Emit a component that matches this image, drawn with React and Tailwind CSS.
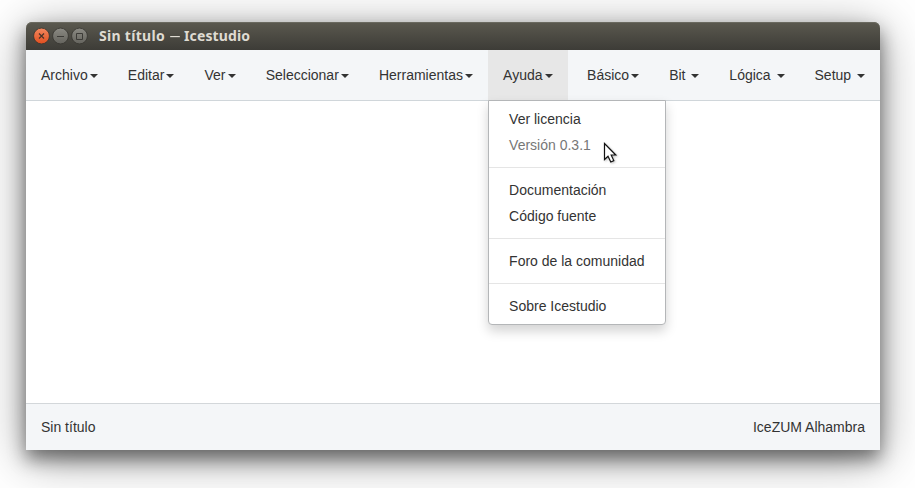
import React from "react";

const leftMenus = ["Archivo", "Editar", "Ver", "Seleccionar", "Herramientas", "Ayuda"];
const rightMenus = ["Básico", "Bit ", "Lógica ", "Setup "];

function Caret() {
  return (
    <span className="ml-[2px] inline-block h-0 w-0 border-x-4 border-t-4 border-x-transparent border-t-[#333] align-middle" />
  );
}

function HelpMenu() {
  return (
    <div className="absolute top-full left-0 z-10 w-[178px] rounded-b border border-[#b4b6b8] bg-white pt-[5px] pb-[5px] shadow-[0_6px_12px_rgba(0,0,0,0.175)]">
      <Item>Ver licencia</Item>
      <Item muted>Versión 0.3.1</Item>
      <Divider />
      <Item>Documentación</Item>
      <Item>Código fuente</Item>
      <Divider />
      <Item>Foro de la comunidad</Item>
      <Divider />
      <Item>Sobre Icestudio</Item>
    </div>
  );
}

function Item({ children, muted }) {
  return (
    <div className={"px-5 py-[3px] leading-5 whitespace-nowrap " + (muted ? "text-[#777]" : "text-[#333]")}>
      {children}
    </div>
  );
}

function Divider() {
  return <div className="my-[9px] h-px bg-[#e5e5e5]" />;
}

function MenuButton({ label }) {
  const open = label === "Ayuda";
  return (
    <div className={"relative h-[50px] px-[15px] py-[15px] leading-5 whitespace-pre " + (open ? "bg-[#e7e7e7]" : "")}>
      {label}
      <Caret />
      {open && <HelpMenu />}
    </div>
  );
}

function TitleBar() {
  return (
    <div className="flex h-7 shrink-0 items-center rounded-t-[6px] bg-linear-to-b from-[#5b594f] to-[#3d3c37] pl-[7px] shadow-[inset_0_1px_0_#6a695f]">
      <svg width="56" height="18" viewBox="0 0 56 18" fill="none" className="shrink-0">
        <defs>
          <linearGradient id="close" x1="0" y1="0" x2="0" y2="1">
            <stop stopColor="#f4885f" />
            <stop offset="1" stopColor="#e04e1f" />
          </linearGradient>
          <linearGradient id="grey" x1="0" y1="0" x2="0" y2="1">
            <stop stopColor="#8b8a83" />
            <stop offset="1" stopColor="#64635d" />
          </linearGradient>
        </defs>
        <circle cx="8.5" cy="9" r="7.9" fill="url(#close)" stroke="#363530" strokeWidth="0.8" />
        <circle cx="27.5" cy="9" r="7.9" fill="url(#grey)" stroke="#363530" strokeWidth="0.8" />
        <circle cx="46.5" cy="9" r="7.9" fill="url(#grey)" stroke="#363530" strokeWidth="0.8" />
        <path d="M6 6.5l5 5m0-5l-5 5" stroke="#483329" strokeWidth="1.2" />
        <path d="M24 9.5h7" stroke="#3c3b37" />
        <path d="M43.5 6.5h6v6h-6z" stroke="#3c3b37" />
      </svg>
      <span className="ml-[10px] flex font-['Noto_Sans',sans-serif] text-[14px] leading-7 font-bold whitespace-nowrap text-[#dfdbd2]">
        <span className="w-[68px] tracking-[0.3px]">Sin título</span>
        <span className="w-[16px] scale-x-75 text-center font-normal">—</span>
        <span className="ml-[1px] tracking-[0.12px]">Icestudio</span>
      </span>
    </div>
  );
}

export default function App() {
  return (
    <div className="h-[488px] w-[915px] overflow-hidden bg-white px-[26px] pt-[22px] font-['Liberation_Sans',Arial,sans-serif] text-[14px] text-[#333]">
      <div className="flex h-[428px] w-[854px] flex-col rounded-t-[6px] bg-white shadow-[0_9px_18px_rgba(0,0,0,0.45),0_8px_48px_rgba(0,0,0,0.42)]">
        <TitleBar />
        <nav className="flex h-[51px] shrink-0 justify-between border-b border-[#d0d6da] bg-[#f4f6f8]">
          <div className="flex gap-[0.14px]">
            {leftMenus.map((label) => <MenuButton key={label} label={label} />)}
          </div>
          <div className="flex">
            {rightMenus.map((label) => <MenuButton key={label} label={label} />)}
          </div>
        </nav>
        <main className="flex-1 bg-white" />
        <footer className="flex h-[47px] shrink-0 items-center justify-between border-t border-[#d3d7da] bg-[#f4f6f8] px-[15px]">
          <span>Sin título</span>
          <span>IceZUM Alhambra</span>
        </footer>
      </div>
      <svg className="absolute top-[142px] left-[603px] z-20 drop-shadow-[1px_1px_1px_rgba(0,0,0,0.25)]" width="15" height="24" viewBox="0 0 15 24">
        <path d="M1.5 1.5v16l3.5-3.3 2.8 5.8 3-1.4-2.6-5.6h4.6z" fill="white" stroke="#111" strokeWidth="1.2" />
      </svg>
    </div>
  );
}
